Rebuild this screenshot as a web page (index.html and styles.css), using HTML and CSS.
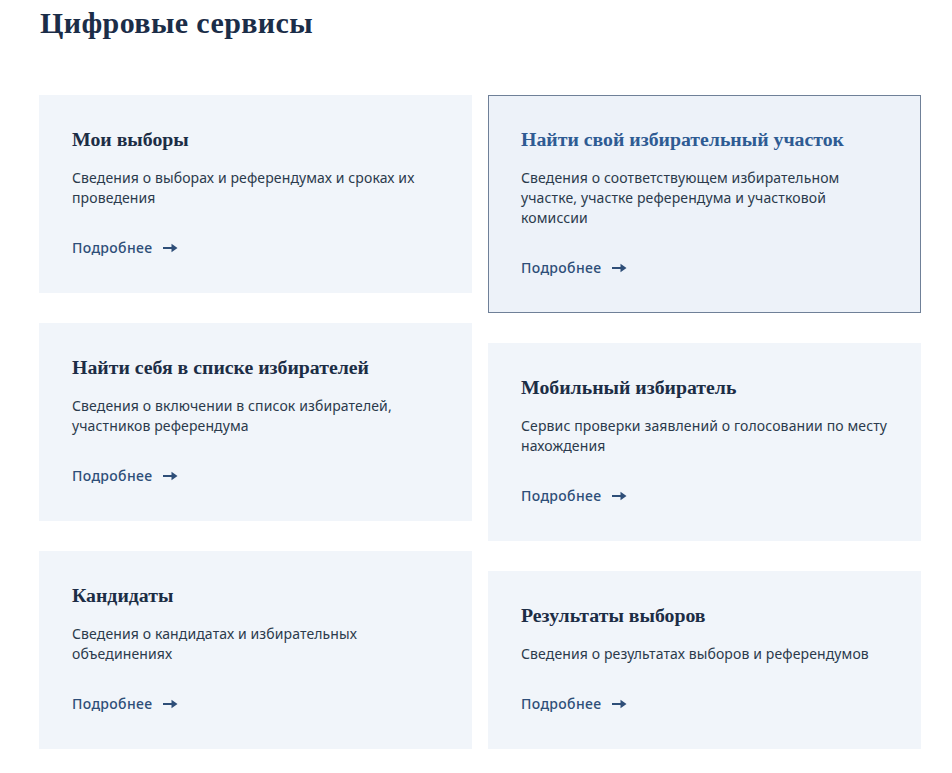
FILE: index.html
```html
<!DOCTYPE html>
<html lang="ru">
<head>
<meta charset="utf-8">
<title>Цифровые сервисы</title>
<link rel="stylesheet" href="styles.css">
</head>
<body>
<section class="services">
  <h1 class="services-title">Цифровые сервисы</h1>
  <div class="services-grid">
    <div class="services-col">
      <a class="card" href="#">
        <h2 class="card-title">Мои выборы</h2>
        <p class="card-text">Сведения о выборах и референдумах и сроках их проведения</p>
        <span class="card-link">Подробнее <svg class="arrow" width="15" height="12" viewBox="0 0 15 12"><path d="M0 5H9V7H0Z M8.5 1.8L14.5 6L8.5 10.2Z" fill="currentColor"/></svg></span>
      </a>
      <a class="card" href="#">
        <h2 class="card-title">Найти себя в списке избирателей</h2>
        <p class="card-text">Сведения о включении в список избирателей, участников референдума</p>
        <span class="card-link">Подробнее <svg class="arrow" width="15" height="12" viewBox="0 0 15 12"><path d="M0 5H9V7H0Z M8.5 1.8L14.5 6L8.5 10.2Z" fill="currentColor"/></svg></span>
      </a>
      <a class="card" href="#">
        <h2 class="card-title">Кандидаты</h2>
        <p class="card-text">Сведения о кандидатах и избирательных объединениях</p>
        <span class="card-link">Подробнее <svg class="arrow" width="15" height="12" viewBox="0 0 15 12"><path d="M0 5H9V7H0Z M8.5 1.8L14.5 6L8.5 10.2Z" fill="currentColor"/></svg></span>
      </a>
    </div>
    <div class="services-col">
      <a class="card card-active" href="#">
        <h2 class="card-title">Найти свой избирательный участок</h2>
        <p class="card-text">Сведения о соответствующем избирательном участке, участке референдума и участковой комиссии</p>
        <span class="card-link">Подробнее <svg class="arrow" width="15" height="12" viewBox="0 0 15 12"><path d="M0 5H9V7H0Z M8.5 1.8L14.5 6L8.5 10.2Z" fill="currentColor"/></svg></span>
      </a>
      <a class="card" href="#">
        <h2 class="card-title">Мобильный избиратель</h2>
        <p class="card-text">Сервис проверки заявлений о голосовании по месту нахождения</p>
        <span class="card-link">Подробнее <svg class="arrow" width="15" height="12" viewBox="0 0 15 12"><path d="M0 5H9V7H0Z M8.5 1.8L14.5 6L8.5 10.2Z" fill="currentColor"/></svg></span>
      </a>
      <a class="card" href="#">
        <h2 class="card-title">Результаты выборов</h2>
        <p class="card-text">Сведения о результатах выборов и референдумов</p>
        <span class="card-link">Подробнее <svg class="arrow" width="15" height="12" viewBox="0 0 15 12"><path d="M0 5H9V7H0Z M8.5 1.8L14.5 6L8.5 10.2Z" fill="currentColor"/></svg></span>
      </a>
    </div>
  </div>
</section>
</body>
</html>
```
FILE: styles.css
```css
html, body {
  margin: 0;
  padding: 0;
  background: #ffffff;
}
.services {
  padding: 5px 31px 0 39px;
}
.services-title {
  margin: 0 0 0 1px;
  font-family: "Liberation Serif", serif;
  font-weight: 700;
  font-size: 30px;
  letter-spacing: 0.4px;
  line-height: 36px;
  color: #1b2d48;
}
.services-grid {
  display: flex;
  gap: 16px;
  margin-top: 54px;
}
.services-col {
  flex: 1 1 0;
  display: flex;
  flex-direction: column;
  gap: 30px;
}
.card {
  display: block;
  text-decoration: none;
  background: #f1f5fa;
  border: 1px solid transparent;
  padding: 32px 32px 34px;
}
.card-active {
  background: #edf2f9;
  border-color: #6f8098;
}
.card-title {
  margin: 0;
  font-family: "Liberation Serif", serif;
  font-weight: 700;
  font-size: 19.8px;
  line-height: 23px;
  color: #1c2d45;
}
.card-active .card-title {
  color: #2e5b93;
}
.card-text {
  margin: 17px 0 0;
  font-family: "Noto Sans", sans-serif;
  font-size: 14px;
  letter-spacing: 0.12px;
  line-height: 20px;
  color: #2b3a4c;
}
.card-link {
  display: flex;
  align-items: center;
  gap: 11px;
  margin-top: 30px;
  font-family: "Noto Sans", sans-serif;
  font-weight: 500;
  font-size: 14px;
  letter-spacing: 0.35px;
  line-height: 20px;
  color: #2e4e78;
}
.arrow {
  display: block;
}
```
